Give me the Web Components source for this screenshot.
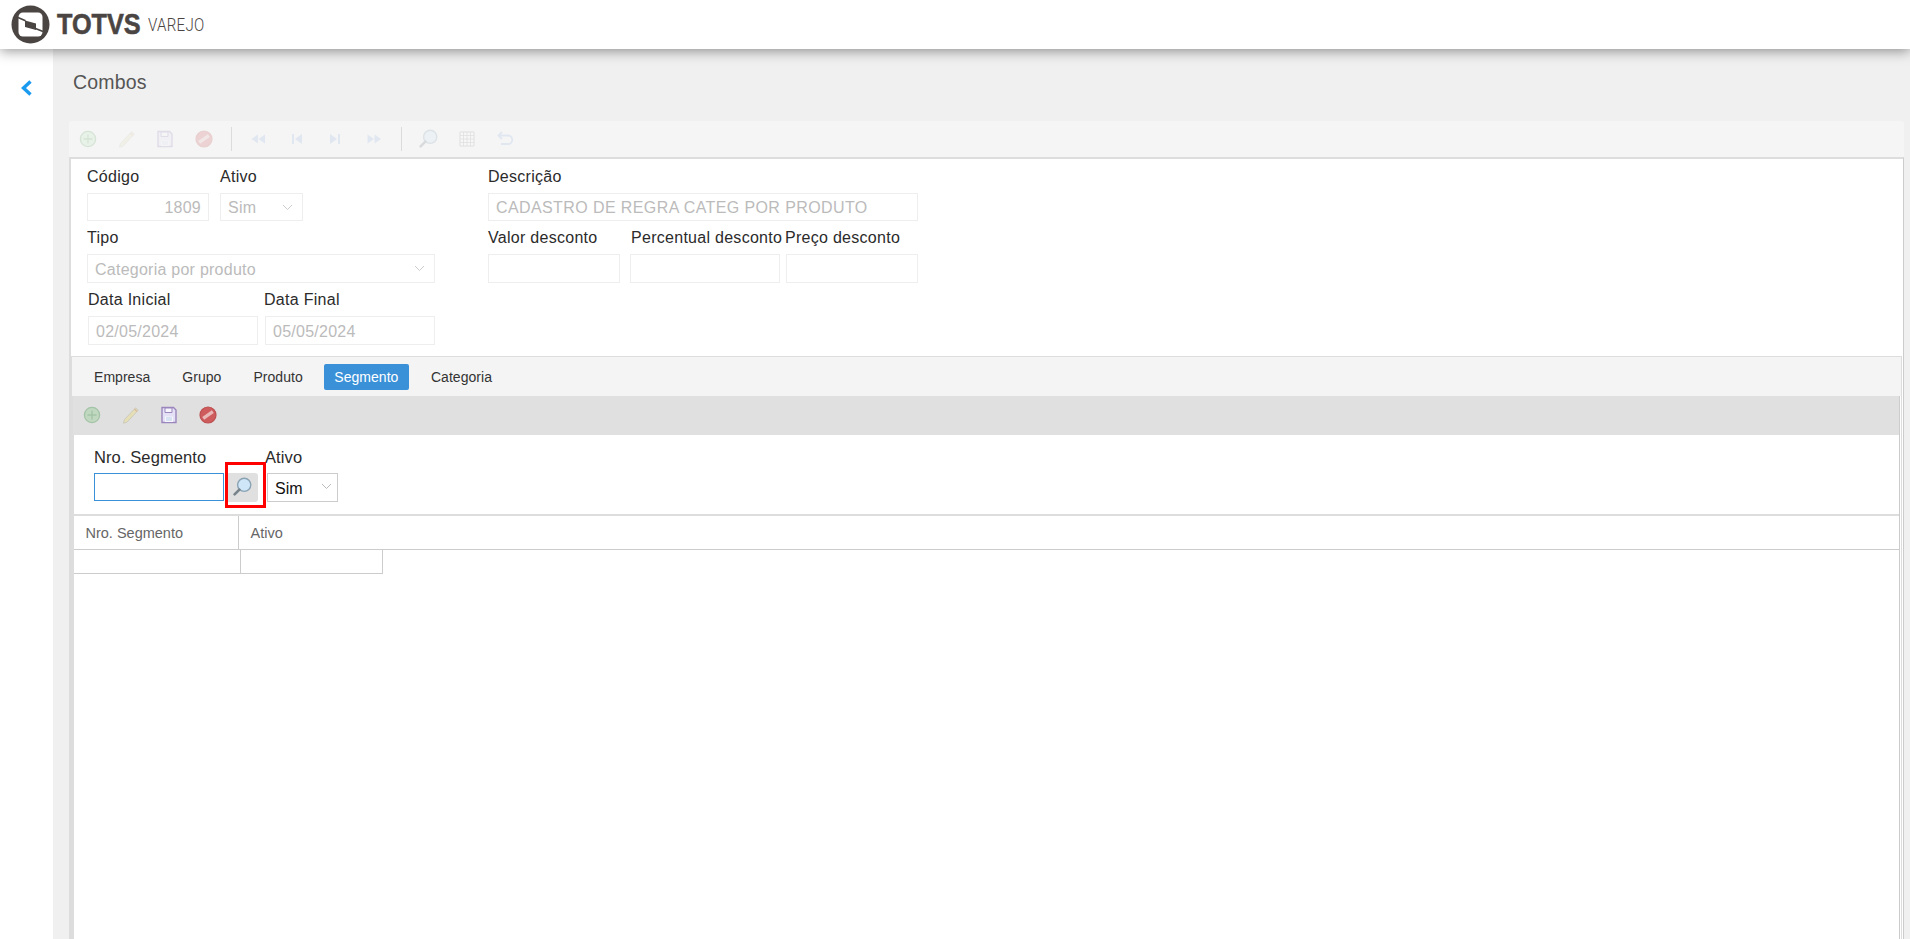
<!DOCTYPE html>
<html lang="pt-BR">
<head>
<meta charset="utf-8">
<title>Combos</title>
<style>
  html, body { margin: 0; height: 939px; overflow: hidden; background: #fff; }
  body { font-family: "Liberation Sans", Arial, sans-serif; }
</style>
</head>
<body>
<app-shell>
  <top-header slot="header"></top-header>
  <side-nav slot="side"></side-nav>
  <page-title>Combos</page-title>
  <tool-bar faded>
    <tool-icon name="plusFaded"></tool-icon><tool-icon name="pencil"></tool-icon><tool-icon name="save"></tool-icon><tool-icon name="stop"></tool-icon>
    <tool-sep></tool-sep>
    <tool-icon name="rewind"></tool-icon><tool-icon name="first"></tool-icon><tool-icon name="last"></tool-icon><tool-icon name="forward"></tool-icon>
    <tool-sep></tool-sep>
    <tool-icon name="search"></tool-icon><tool-icon name="grid"></tool-icon><tool-icon name="undo"></tool-icon>
  </tool-bar>
  <main-panel>
    <combo-form></combo-form>
    <tab-panel></tab-panel>
  </main-panel>
</app-shell>

<script>
const ICONS = {
  plus: '<circle cx="10" cy="10" r="7.6" fill="#c0d8c0" stroke="#a3c3a6" stroke-width="1.3"/><path d="M10 5.5v9M5.5 10h9" stroke="#a3c3a6" stroke-width="1.3"/>',
  plusFaded: '<circle cx="10" cy="10" r="7.6" fill="#bfeabf" stroke="#66aa66" stroke-width="1.3"/><path d="M10 5.5v9M5.5 10h9" stroke="#66aa66" stroke-width="1.3"/>',
  pencil: '<path d="M3.5 14.5 14.6 2.8l2.6 2.4L6 17.2l-3.6 1z" fill="#e6dfb6" stroke="#cccbbc" stroke-width="1"/><path d="m13.4 4 2.6 2.5" stroke="#d9b9a0" stroke-width="1.2"/>',
  save: '<path d="M3 2.5h11.5l2.5 2.5v12.5H3z" fill="#e4e0f6" stroke="#9a86bd" stroke-width="1.4"/><path d="M6 3h7v4.5H6z" fill="#f6f5fc" stroke="#9a86bd"/><path d="M6 11.5h8V17H6z" fill="#f7f6fd"/><path d="M7 13h6M7 15h6" stroke="#b5cde6"/>',
  stop: '<circle cx="10" cy="10" r="8" fill="#cf5c5d" stroke="#bd4f50" stroke-width="1.2"/><path d="M5.2 13.4 14.8 6.6" stroke="#e9b9b8" stroke-width="3.2"/>',
  rewind: '<path d="M10 5.5v9L3.5 10zM17 5.5v9L10.5 10z" fill="#9db9e6"/>',
  first: '<path d="M5 5h2v10H5zM15 5v10L8 10z" fill="#9db9e6"/>',
  last: '<path d="M15 5h-2v10h2zM5 5v10l7-5z" fill="#9db9e6"/>',
  forward: '<path d="M3.5 5.5v9L10 10zM10.5 5.5v9L17 10z" fill="#9db9e6"/>',
  search: '<circle cx="12.2" cy="7.8" r="6.6" fill="#cfe6f8" stroke="#8aa3b4" stroke-width="1.4"/><path d="M7.4 12.6 2.6 17.4" stroke="#77838b" stroke-width="2.6" stroke-linecap="round"/>',
  grid: '<path d="M3 3h14v14H3z" fill="#fff" stroke="#999"/><path d="M3 6.5h14M3 10h14M3 13.5h14M6.5 3v14M10 3v14M13.5 3v14" stroke="#999" stroke-width=".8"/>',
  undo: '<path d="M7 3 3.5 6.5 7 10" fill="none" stroke="#9db9e6" stroke-width="1.8"/><path d="M4 6.5h9a3.7 3.7 0 0 1 0 8.5H6" fill="none" stroke="#9db9e6" stroke-width="1.8"/>'
};

class AppShell extends HTMLElement {
  constructor() {
    super();
    this.attachShadow({ mode: 'open' });
    this.shadowRoot.innerHTML = `
      <style>
        :host { display:flex; flex-direction:column; height:939px; overflow:hidden; }
        .body { flex:1; display:flex; min-height:0; }
        .content { flex:1; min-width:0; display:flex; flex-direction:column; background:#f0f0f0; padding:0 6px 0 16px; }
      </style>
      <slot name="header"></slot>
      <div class="body">
        <slot name="side"></slot>
        <div class="content"><slot></slot></div>
      </div>`;
  }
}

class TopHeader extends HTMLElement {
  constructor() {
    super();
    this.attachShadow({ mode: 'open' });
    this.shadowRoot.innerHTML = `
      <style>
        :host { display:flex; align-items:center; height:49px; background:#fff; position:relative; z-index:2;
                box-shadow:0 2px 12px rgba(0,0,0,.42); color:#4a4543; }
        svg { margin-left:11px; flex:none; }
        .brand { font:700 29px/1 "Liberation Sans", sans-serif; margin-left:7px; width:85px; display:inline-block;
                 -webkit-text-stroke:.6px #4a4543; transform:scaleX(.87); transform-origin:left center; white-space:nowrap; }
        .sub { font:300 18px/1 Roboto, "Liberation Sans", sans-serif; margin-left:6px; display:inline-block; color:#4a4543;
               letter-spacing:.3px; transform:scaleX(.84); transform-origin:left center; white-space:nowrap; }
      </style>
      <svg width="39" height="39" viewBox="0 0 39 39">
        <circle cx="19.5" cy="19.5" r="19" fill="#4a4543"/>
        <rect x="7.5" y="7.5" width="24" height="24" rx="4.5" fill="#fff"/>
        <path d="M14 15.5 25 18.5v6.5L14 22z" fill="#4a4543"/>
        <path d="M7 12.5 14.5 15.8M24.5 23.5l7.5 3" stroke="#4a4543" stroke-width="1.6" fill="none"/>
      </svg>
      <span class="brand">TOTVS</span><span class="sub">VAREJO</span>`;
  }
}

class SideNav extends HTMLElement {
  constructor() {
    super();
    this.attachShadow({ mode: 'open' });
    this.shadowRoot.innerHTML = `
      <style>
        :host { display:block; width:53px; flex:none; background:#fff; }
        svg { display:block; margin:31px 0 0 20px; }
      </style>
      <svg width="13" height="16" viewBox="0 0 13 16"><path d="M10.5 1.5 3.5 8l7 6.5" fill="none" stroke="#1a9bf0" stroke-width="3.4"/></svg>`;
  }
}

class PageTitle extends HTMLElement {
  constructor() {
    super();
    this.attachShadow({ mode: 'open' });
    this.shadowRoot.innerHTML = `
      <style>
        :host { display:block; height:72px; flex:none; padding-left:4px; box-sizing:border-box;
                font:400 19.5px/66px "Liberation Sans", sans-serif; letter-spacing:.2px; color:#555; }
      </style>
      <slot></slot>`;
  }
}

class ToolIcon extends HTMLElement {
  constructor() {
    super();
    this.attachShadow({ mode: 'open' });
    const name = this.getAttribute('name');
    this.shadowRoot.innerHTML = `
      <style>
        :host { display:flex; align-items:center; justify-content:center; width:38.5px; flex:none; }
        svg { display:block; }
      </style>
      <svg width="20" height="20" viewBox="0 0 20 20">${ICONS[name] || ''}</svg>`;
  }
}

class ToolSep extends HTMLElement {
  constructor() {
    super();
    this.attachShadow({ mode: 'open' });
    this.shadowRoot.innerHTML = `
      <style>:host { display:block; width:1px; height:24px; background:#dcdcdc; margin:0 7px 0 8px; align-self:center; flex:none; }</style>`;
  }
}

class ToolBar extends HTMLElement {
  constructor() {
    super();
    this.attachShadow({ mode: 'open' });
    this.shadowRoot.innerHTML = `
      <style>
        :host { display:flex; height:36px; flex:none; background:#f5f5f5; border-radius:3px 3px 0 0; }
        :host([dark]) { height:38.5px; background:#e0e0e0; border-radius:0; }
        :host([faded]) ::slotted(tool-icon) { opacity:.22; }
      </style>
      <slot></slot>`;
  }
}

class MainPanel extends HTMLElement {
  constructor() {
    super();
    this.attachShadow({ mode: 'open' });
    this.shadowRoot.innerHTML = `
      <style>
        :host { display:flex; flex-direction:column; flex:1; min-height:0; background:#fff;
                border:solid #ddd; border-width:2px 0 0 2px; border-right:1px solid #ccc; }
      </style>
      <slot></slot>`;
  }
}

class FormField extends HTMLElement {
  constructor() {
    super();
    this.attachShadow({ mode: 'open' });
    const label = this.getAttribute('label') || '';
    const value = this.getAttribute('value') || '';
    const chevron = this.hasAttribute('select')
      ? `<svg width="11" height="7" viewBox="0 0 11 7"><path d="M1 1l4.5 4.5L10 1" fill="none" stroke="#ccc" stroke-width="1"/></svg>` : '';
    this.shadowRoot.innerHTML = `
      <style>
        :host { display:block; flex:none; width:var(--w, 100px); margin-left:var(--ml, 0); }
        .label { height:33px; line-height:34px; font-size:16px; letter-spacing:.28px; color:#2b2b2b; white-space:nowrap; margin-left:var(--lx, 0); }
        .box { height:var(--h, 28px); box-sizing:border-box; border:1px solid #eee; display:flex; align-items:center;
               padding:2px 7px 0; color:#bbb; font-size:16px; letter-spacing:var(--ls, .25px); white-space:nowrap; background:#fff; justify-content:space-between; }
        :host([right]) .box { justify-content:flex-end; }
        svg { flex:none; margin:-2px 2px 0 0; }
      </style>
      <div class="label">${label}</div>
      <div class="box"><span>${value}</span>${chevron}</div>`;
  }
}

class ComboForm extends HTMLElement {
  constructor() {
    super();
    this.attachShadow({ mode: 'open' });
    this.shadowRoot.innerHTML = `
      <style>
        :host { display:flex; flex:none; height:197px; box-sizing:border-box; padding:1px 0 0 16px; }
        .col { display:flex; flex-direction:column; flex:none; }
        .left { width:348px; }
        .right { width:430px; margin-left:53px; }
        .row { display:flex; flex:none; }
      </style>
      <div class="col left">
        <div class="row">
          <form-field label="Código" value="1809" right style="--w:122px"></form-field>
          <form-field label="Ativo" value="Sim" select style="--w:83px;--ml:11px"></form-field>
        </div>
        <div class="row"><form-field label="Tipo" value="Categoria por produto" select style="--w:348px;--h:29px"></form-field></div>
        <div class="row" style="margin-left:1px">
          <form-field label="Data Inicial" value="02/05/2024" style="--w:170px;--h:29px"></form-field>
          <form-field label="Data Final" value="05/05/2024" style="--w:170px;--h:29px;--ml:7px;--lx:-1px"></form-field>
        </div>
      </div>
      <div class="col right">
        <div class="row"><form-field label="Descrição" value="CADASTRO DE REGRA CATEG POR PRODUTO" style="--w:430px;--ls:.4px"></form-field></div>
        <div class="row">
          <form-field label="Valor desconto" style="--w:132px;--h:29px"></form-field>
          <form-field label="Percentual desconto" style="--w:150px;--h:29px;--ml:10px;--lx:1px"></form-field>
          <form-field label="Preço desconto" style="--w:132px;--h:29px;--ml:6px;--lx:-1px"></form-field>
        </div>
      </div>`;
  }
}

class TabStrip extends HTMLElement {
  constructor() {
    super();
    this.attachShadow({ mode: 'open' });
    const tabs = (this.getAttribute('tabs') || '').split(',');
    const active = this.getAttribute('active');
    this.shadowRoot.innerHTML = `
      <style>
        :host { display:flex; align-items:center; height:39px; flex:none; background:#f4f4f4; padding-left:12px; box-sizing:border-box; }
        .tab { height:26px; line-height:26px; padding:0 10px; margin-right:12px; border-radius:2px; font-size:14px; letter-spacing:.04px; color:#333; }
        .tab.on { background:#3a91d8; color:#fff; margin-left:-1px; padding:0 10.5px; }
      </style>
      ${tabs.map(t => `<div class="tab${t === active ? ' on' : ''}">${t}</div>`).join('')}`;
  }
}

class SearchForm extends HTMLElement {
  constructor() {
    super();
    this.attachShadow({ mode: 'open' });
    this.shadowRoot.innerHTML = `
      <style>
        :host { display:flex; flex:none; height:79px; box-sizing:border-box; padding-left:20px; border-left:1px solid #ddd; font-size:16.5px; color:#2b2b2b; }
        .field { display:flex; flex-direction:column; flex:none; }
        .label { height:38px; line-height:44px; letter-spacing:.1px; white-space:nowrap; }
        .input { width:130px; height:28px; box-sizing:border-box; border:1px solid #3a91d8; background:#fff; }
        .btn { width:32px; height:29px; margin:38px 0 0 2px; flex:none; background:#e0e0e0; border-radius:3px; display:flex; align-items:center; justify-content:center; position:relative; }
        .mark { position:absolute; left:-1px; top:-11px; width:41px; height:46px; box-sizing:border-box; border:solid #f00; border-width:3px 3px 3px 3.5px; pointer-events:none; }
        .ativo { margin-left:9px; width:73px; }
        .ativo .label { margin-left:-2px; }
        .select { width:71px; height:29px; box-sizing:border-box; border:1px solid #ccc; display:flex; align-items:center; justify-content:space-between; padding:3px 5px 0 7px; color:#111; font-size:16px; }
        svg { display:block; flex:none; }
        .select svg { margin-top:-5px; }
      </style>
      <div class="field"><div class="label">Nro. Segmento</div><div class="input"></div></div>
      <div class="btn">
        <svg width="20" height="20" viewBox="0 0 20 20">${ICONS.search}</svg>
        <div class="mark"></div>
      </div>
      <div class="field ativo">
        <div class="label">Ativo</div>
        <div class="select"><span>Sim</span><svg width="11" height="7" viewBox="0 0 11 7"><path d="M1 1l4.5 4.5L10 1" fill="none" stroke="#bbb" stroke-width="1"/></svg></div>
      </div>`;
  }
}

class DataGrid extends HTMLElement {
  constructor() {
    super();
    this.attachShadow({ mode: 'open' });
    this.shadowRoot.innerHTML = `
      <style>
        :host { display:block; flex:1; min-height:0; border-top:2px solid #ddd; border-left:1px solid #ddd; color:#666; font-size:14.5px; }
        .head { display:flex; height:34px; box-sizing:border-box; border-bottom:1px solid #ccc; }
        .head div { line-height:34px; padding-left:11.5px; box-sizing:border-box; }
        .head .c1 { width:165px; border-right:1px solid #ccc; }
        .row { display:flex; width:309px; height:24px; box-sizing:border-box; border-bottom:1px solid #ccc; border-right:1px solid #ccc; }
        .row .c1 { width:165.5px; border-right:1px solid #ccc; }
      </style>
      <div class="head"><div class="c1">Nro. Segmento</div><div>Ativo</div></div>
      <div class="row"><div class="c1"></div></div>`;
  }
}

class TabPanel extends HTMLElement {
  constructor() {
    super();
    this.attachShadow({ mode: 'open' });
    this.shadowRoot.innerHTML = `
      <style>
        :host { display:flex; flex-direction:column; flex:1; min-height:0; margin:0 1px 0 0; background:#fff;
                border-top:1px solid #ddd; border-left:1px solid #ddd; border-right:1px solid #ddd; }
        .inner { display:flex; flex-direction:column; flex:1; min-height:0; margin-right:1px; border-left:1px solid #ddd; border-right:1px solid #ccc; }
      </style>
      <tab-strip tabs="Empresa,Grupo,Produto,Segmento,Categoria" active="Segmento"></tab-strip>
      <div class="inner">
        <tool-bar dark>
          <tool-icon name="plus"></tool-icon><tool-icon name="pencil"></tool-icon><tool-icon name="save"></tool-icon><tool-icon name="stop"></tool-icon>
        </tool-bar>
        <search-form></search-form>
        <data-grid></data-grid>
      </div>`;
  }
}

customElements.define('tool-icon', ToolIcon);
customElements.define('tool-sep', ToolSep);
customElements.define('tool-bar', ToolBar);
customElements.define('form-field', FormField);
customElements.define('combo-form', ComboForm);
customElements.define('tab-strip', TabStrip);
customElements.define('search-form', SearchForm);
customElements.define('data-grid', DataGrid);
customElements.define('tab-panel', TabPanel);
customElements.define('main-panel', MainPanel);
customElements.define('page-title', PageTitle);
customElements.define('side-nav', SideNav);
customElements.define('top-header', TopHeader);
customElements.define('app-shell', AppShell);
</script>
</body>
</html>
